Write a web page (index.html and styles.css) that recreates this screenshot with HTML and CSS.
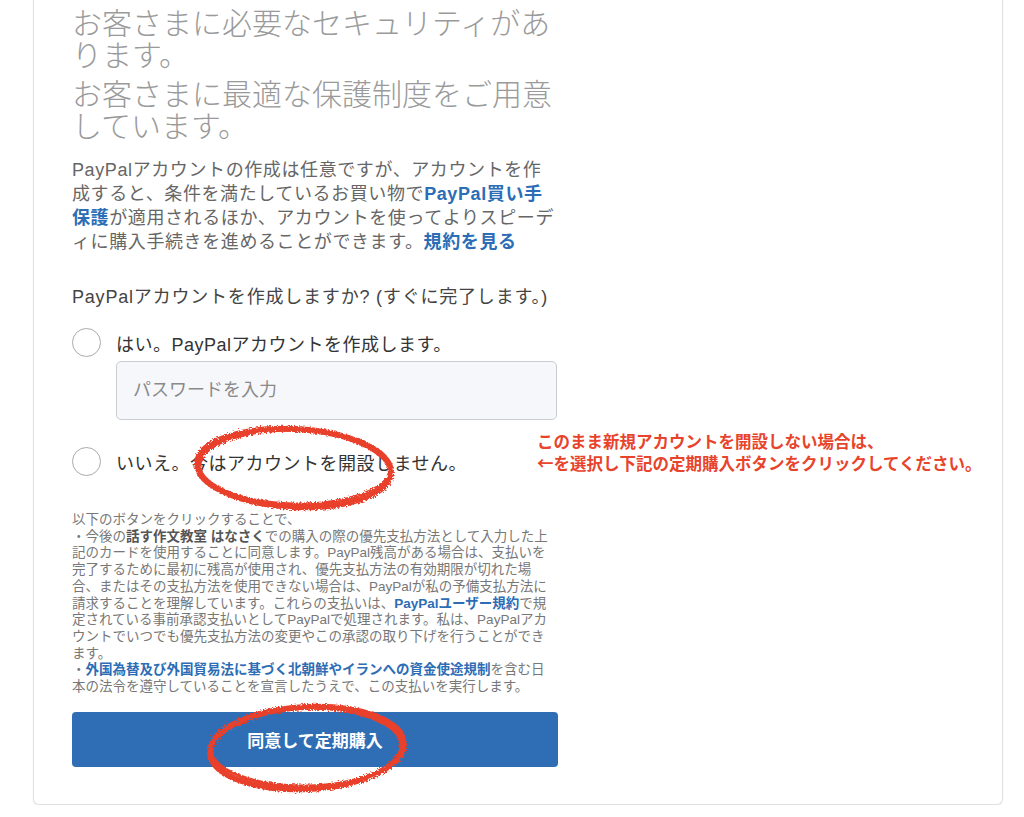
FILE: index.html
```html
<!DOCTYPE html>
<html lang="ja">
<head>
    <meta charset="UTF-8">
    <meta name="viewport" content="width=device-width, initial-scale=1.0">
    <title>PayPal 定期購入</title>
    <link rel="stylesheet" href="styles.css">
</head>
<body>
    <div class="card">
        <div class="heading">
            <p>お客さまに必要なセキュリティがあ<br>ります。</p>
            <p>お客さまに最適な保護制度をご用意<br>しています。</p>
        </div>
        <p class="intro">PayPalアカウントの作成は任意ですが、アカウントを作<br>成すると、条件を満たしているお買い物で<a href="#">PayPal買い手<br>保護</a>が適用されるほか、アカウントを使ってよりスピーデ<br>ィに購入手続きを進めることができます。<a href="#">規約を見る</a></p>
        <p class="question">PayPalアカウントを作成しますか? (すぐに完了します。)</p>
        <label class="option first"><span class="radio"></span>はい。PayPalアカウントを作成します。</label>
        <input class="password" type="password" placeholder="パスワードを入力">
        <label class="option second"><span class="radio"></span>いいえ。今はアカウントを開設しません。</label>
        <div class="legal">
            以下のボタンをクリックすることで、<br>
            ・今後の<b>話す作文教室 はなさく</b>での購入の際の優先支払方法として入力した上<br>
            記のカードを使用することに同意します。PayPal残高がある場合は、支払いを<br>
            完了するために最初に残高が使用され、優先支払方法の有効期限が切れた場<br>
            合、またはその支払方法を使用できない場合は、PayPalが私の予備支払方法に<br>
            請求することを理解しています。これらの支払いは、<a href="#">PayPalユーザー規約</a>で規<br>
            定されている事前承認支払いとしてPayPalで処理されます。私は、PayPalアカ<br>
            ウントでいつでも優先支払方法の変更やこの承認の取り下げを行うことができ<br>
            ます。<br>
            ・<a href="#">外国為替及び外国貿易法に基づく北朝鮮やイランへの資金使途規制</a>を含む日<br>
            本の法令を遵守していることを宣言したうえで、この支払いを実行します。
        </div>
        <button class="submit">同意して定期購入</button>

        <p class="note">このまま新規アカウントを開設しない場合は、<br>←を選択し下記の定期購入ボタンをクリックしてください。</p>

        <svg class="mark mark-option" width="210" height="92" viewBox="0 0 210 92">
            <defs>
                <filter id="crayon" x="-5%" y="-10%" width="110%" height="120%">
                    <feTurbulence type="fractalNoise" baseFrequency="0.6" numOctaves="3" result="noise"/>
                    <feDisplacementMap in="SourceGraphic" in2="noise" scale="5"/>
                </filter>
            </defs>
            <g filter="url(#crayon)" fill="none" stroke="#e8412a" stroke-linecap="round">
                <ellipse cx="104" cy="46" rx="97" ry="39" stroke-width="6" transform="rotate(3 104 46)"/>
                <ellipse cx="105" cy="45" rx="95" ry="37" stroke-width="3" transform="rotate(1 104 46)"/>
            </g>
        </svg>
        <svg class="mark mark-submit" width="210" height="98" viewBox="0 0 210 98">
            <g filter="url(#crayon)" fill="none" stroke="#e8412a" stroke-linecap="round">
                <ellipse cx="104" cy="48" rx="97" ry="41" stroke-width="6" transform="rotate(-3 104 48)"/>
                <ellipse cx="103" cy="47" rx="95" ry="39" stroke-width="3" transform="rotate(-1 104 48)"/>
            </g>
        </svg>
    </div>
</body>
</html>
```

FILE: styles.css
```css
body {
    margin: 0;
    background: #fff;
    font-family: "Liberation Sans", "Noto Sans CJK JP", sans-serif;
    color: #333;
}
.card {
    position: relative;
    box-sizing: border-box;
    width: 970px;
    margin-left: 33px;
    padding: 8px 38px 37px 38px;
    border: 1px solid #e0e0e0;
    border-top: 0;
    border-radius: 0 0 6px 6px;
    box-shadow: 0 1px 2px rgba(0, 0, 0, 0.06);
}
.heading p {
    margin: 0;
    font-size: 30px;
    line-height: 32px;
    font-weight: 200;
    color: #9a9a9a;
}
.heading p + p { margin-top: 7px; }
.intro {
    margin: 15px 0 0;
    font-size: 18px;
    line-height: 24px;
    letter-spacing: 0.6px;
    color: #666;
}
a {
    color: #2c6db5;
    font-weight: bold;
    text-decoration: none;
}
.question {
    margin: 31px 0 0;
    font-size: 18px;
    line-height: 24px;
    letter-spacing: 0.8px;
    color: #444;
}
.option {
    display: flex;
    align-items: center;
    gap: 15px;
    font-size: 18px;
    letter-spacing: 0.5px;
    color: #333;
}
.option.first { margin-top: 19px; }
.option.second { margin-top: 27px; }
.radio {
    width: 27px;
    height: 27px;
    border: 1.5px solid #aaa;
    border-radius: 50%;
    flex: none;
}
.password {
    display: block;
    box-sizing: border-box;
    width: 441px;
    height: 59px;
    margin: 4px 0 0 44px;
    padding: 0 16px;
    border: 1px solid #c9cdd2;
    border-radius: 5px;
    background: #f5f7fa;
    font-family: inherit;
    font-size: 18px;
}
.password::placeholder { color: #8a8a8a; }
.legal {
    margin-top: 36px;
    width: 490px;
    font-size: 13.5px;
    line-height: 16.7px;
    color: #777;
    white-space: nowrap;
}
.legal b { color: #555; }
.submit {
    display: block;
    width: 486px;
    height: 55px;
    margin-top: 16px;
    border: none;
    border-radius: 4px;
    background: #2f6db5;
    color: #fff;
    font-family: inherit;
    font-size: 17px;
    font-weight: bold;
    cursor: pointer;
}
.note {
    position: absolute;
    left: 503px;
    top: 430px;
    margin: 0;
    font-family: "Noto Sans CJK JP", sans-serif;
    font-size: 16.5px;
    line-height: 22px;
    font-weight: bold;
    color: #e8432b;
    white-space: nowrap;
}
.mark {
    position: absolute;
    pointer-events: none;
}
.mark-option { left: 156px; top: 422px; }
.mark-submit { left: 169px; top: 700px; }
```
